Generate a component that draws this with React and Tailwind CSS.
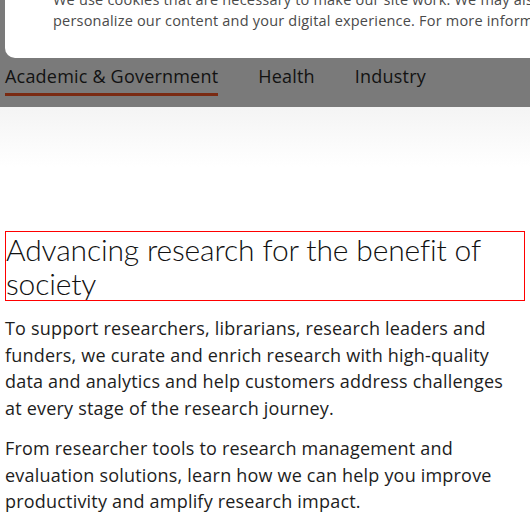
import React from 'react';

const tabs = ['Academic & Government', 'Health', 'Industry'];

const App = () => {
    return (
        <div className="min-h-[530px] bg-white font-['Open_Sans','Lato',sans-serif] text-[#1d1d1d] overflow-hidden">
            {/* Dimmed top area with cookie banner and tabs */}
            <header className="h-[107px] bg-[#7a7a7a] flex flex-col">
                <div className="ml-[5px] h-[58px] bg-white rounded-bl-[10px] overflow-hidden">
                    <p className="-mt-[11px] pl-[48px] text-[14.5px] leading-[21px] tracking-[0.2px] text-[#4a4a4a] whitespace-nowrap">
                        We use cookies that are necessary to make our site work. We may also use additional cookies to analyze, improve, and<br />
                        personalize our content and your digital experience. For more information, see our Cookie Policy
                    </p>
                </div>
                <nav className="flex gap-[40px] px-[5px] mt-[6px]">
                    {tabs.map((tab, i) => (
                        <div key={tab} className="flex flex-col">
                            <span className="text-[18px] leading-[24px] tracking-[0.2px] text-[#121212]">{tab}</span>
                            {i === 0 && <span className="mt-[5px] h-[3px] bg-[#7a2a12]" />}
                        </div>
                    ))}
                </nav>
            </header>

            {/* Soft fade below the header */}
            <div className="h-[60px] bg-gradient-to-b from-[#f4f4f4] to-white" />

            <main className="pt-[64px] px-[5px]">
                <h1 className="border border-[#ff0000] font-['Lato',sans-serif] text-[30px] leading-[34px] font-light tracking-[-0.15px] text-[#111]">
                    Advancing research for the benefit of society
                </h1>
                <p className="mt-[14px] pr-[12px] text-[18px] leading-[26.5px] tracking-[0.2px]">
                    To support researchers, librarians, research leaders and funders, we curate and enrich research with high-quality data and analytics and help customers address challenges at every stage of the research journey.
                </p>
                <p className="mt-[14px] pr-[12px] text-[18px] leading-[26.5px] tracking-[0.2px]">
                    From researcher tools to research management and evaluation solutions, learn how we can help you improve productivity and amplify research impact.
                </p>
            </main>
        </div>
    );
};

export default App;
